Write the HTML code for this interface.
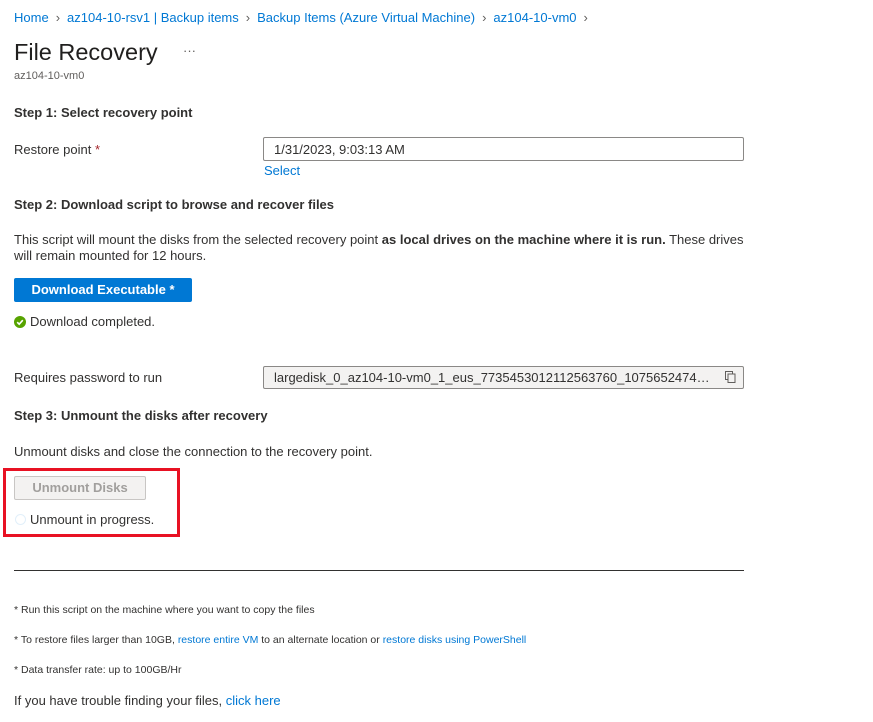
<!DOCTYPE html>
<html><head><meta charset="utf-8"><style>
*{margin:0;padding:0;box-sizing:border-box}
body{width:873px;height:722px;background:#fff;font-family:"Liberation Sans",sans-serif;color:#323130;font-size:13px;position:relative;overflow:hidden}
.a{position:absolute;white-space:nowrap;line-height:16px}
.lnk{color:#0078d4}
.b{font-weight:bold}
.sm{font-size:10.5px}
.sep{color:#605e5c;margin:0 7px}
</style></head><body>
<div class="a" style="left:14px;top:10px"><span class="lnk">Home</span><span class="sep">&#8250;</span><span class="lnk">az104-10-rsv1 | Backup items</span><span class="sep">&#8250;</span><span class="lnk">Backup Items (Azure Virtual Machine)</span><span class="sep">&#8250;</span><span class="lnk">az104-10-vm0</span><span class="sep">&#8250;</span></div>
<div class="a" style="left:14px;top:38px;font-size:23.5px;line-height:28px;color:#201f1e">File Recovery</div>
<div class="a" style="left:183px;top:43px;color:#605e5c">&middot;&middot;&middot;</div>
<div class="a" style="left:14px;top:68px;font-size:11px;color:#605e5c">az104-10-vm0</div>
<div class="a b" style="left:14px;top:105px">Step 1: Select recovery point</div>
<div class="a" style="left:14px;top:142px">Restore point <span style="color:#a4262c">*</span></div>
<div class="a" style="left:263px;top:137px;width:481px;height:24px;border:1px solid #8a8886;border-radius:2px;padding:4px 0 0 10px">1/31/2023, 9:03:13 AM</div>
<div class="a lnk" style="left:264px;top:163px">Select</div>
<div class="a b" style="left:14px;top:197px">Step 2: Download script to browse and recover files</div>
<div class="a" style="left:14px;top:232px">This script will mount the disks from the selected recovery point <b>as local drives on the machine where it is run.</b> These drives</div>
<div class="a" style="left:14px;top:248px">will remain mounted for 12 hours.</div>
<div class="a b" style="left:14px;top:278px;width:178px;height:24px;background:#0078d4;color:#fff;border-radius:2px;text-align:center;line-height:24px">Download Executable *</div>
<svg class="a" style="left:14px;top:316px" width="12" height="12" viewBox="0 0 12 12"><circle cx="6" cy="6" r="6" fill="#57a300"/><path d="M3.2 6.2l2 2 3.6-4" stroke="#fff" stroke-width="1.6" fill="none"/></svg>
<div class="a" style="left:30px;top:314px">Download completed.</div>
<div class="a" style="left:14px;top:370px">Requires password to run</div>
<div class="a" style="left:263px;top:366px;width:481px;height:23px;border:1px solid #8a8886;border-radius:2px;background:#f3f2f1;padding:3px 28px 0 10px;color:#323130;overflow:hidden;text-overflow:ellipsis">largedisk_0_az104-10-vm0_1_eus_7735453012112563760_107565247498_2...</div>
<svg class="a" style="left:725px;top:371px" width="11" height="12" viewBox="0 0 11 12"><rect x="0.5" y="0.5" width="7" height="8" fill="none" stroke="#605e5c"/><rect x="3" y="3" width="7" height="8.5" fill="#f3f2f1" stroke="#605e5c"/></svg>
<div class="a b" style="left:14px;top:408px">Step 3: Unmount the disks after recovery</div>
<div class="a" style="left:14px;top:444px">Unmount disks and close the connection to the recovery point.</div>
<div class="a" style="left:3px;top:468px;width:177px;height:69px;border:3px solid #e81123"></div>
<div class="a b" style="left:14px;top:476px;width:132px;height:24px;background:#f3f2f1;border:1px solid #c8c6c4;border-radius:2px;color:#a19f9d;text-align:center;line-height:22px">Unmount Disks</div>
<div class="a" style="left:15px;top:514px;width:11px;height:11px;border:1.5px solid #e1effa;border-radius:50%"></div>
<div class="a" style="left:30px;top:512px">Unmount in progress.</div>
<div class="a" style="left:14px;top:570px;width:730px;height:1px;background:#323130"></div>
<div class="a sm" style="left:14px;top:602px">* Run this script on the machine where you want to copy the files</div>
<div class="a sm" style="left:14px;top:632px">* To restore files larger than 10GB, <span class="lnk">restore entire VM</span> to an alternate location or <span class="lnk">restore disks using PowerShell</span></div>
<div class="a sm" style="left:14px;top:662px">* Data transfer rate: up to 100GB/Hr</div>
<div class="a" style="left:14px;top:693px">If you have trouble finding your files, <span class="lnk">click here</span></div>
</body></html>
